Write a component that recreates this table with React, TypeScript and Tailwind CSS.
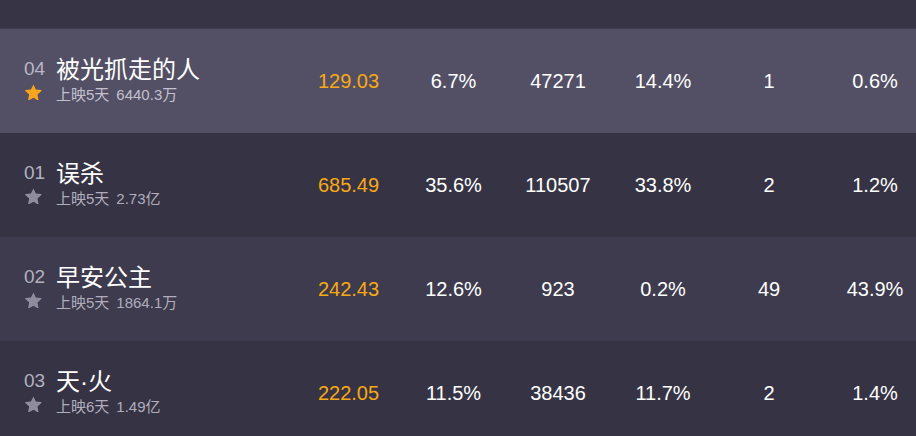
import React from "react";

type Row = {
  rank: string;
  title: string;
  days: string;
  total: string;
  vals: string[];
  bg: string;
  highlight?: boolean;
};

const rows: Row[] = [
  { rank: "04", title: "被光抓走的人", days: "上映5天", total: "6440.3万", vals: ["129.03", "6.7%", "47271", "14.4%", "1", "0.6%"], bg: "bg-[#535066]", highlight: true },
  { rank: "01", title: "误杀", days: "上映5天", total: "2.73亿", vals: ["685.49", "35.6%", "110507", "33.8%", "2", "1.2%"], bg: "bg-[#363444]" },
  { rank: "02", title: "早安公主", days: "上映5天", total: "1864.1万", vals: ["242.43", "12.6%", "923", "0.2%", "49", "43.9%"], bg: "bg-[#3d3b4d]" },
  { rank: "03", title: "天·火", days: "上映6天", total: "1.49亿", vals: ["222.05", "11.5%", "38436", "11.7%", "2", "1.4%"], bg: "bg-[#363444]" },
];

const colW = ["w-[105px]", "w-[105px]", "w-[104px]", "w-[106px]", "w-[106px]", "w-[106px]"];

function Star({ color }: { color: string }) {
  return (
    <svg width="17" height="16" viewBox="0 0 24 23" fill={color}>
      <path d="M12 0.8l3.3 7 7.6 0.9c0.6 0.1 0.9 0.8 0.4 1.3l-5.6 5.2 1.5 7.5c0.1 0.6-0.5 1.1-1.1 0.8L12 19.8l-6.6 3.7c-0.6 0.3-1.2-0.2-1.1-0.8l1.5-7.5L0.2 10c-0.5-0.4-0.2-1.2 0.4-1.3l7.6-0.9z" />
    </svg>
  );
}

export default function App() {
  return (
    <div
      className="w-[916px] h-[436px] overflow-hidden bg-[#363444]"
      style={{ fontFamily: '"Liberation Sans", "Noto Sans CJK SC", sans-serif' }}
    >
      <div className="h-[29px] bg-[#373545] border-b border-[#3e3c50]" />
      {rows.map((r) => (
        <div key={r.rank} className={`flex items-center h-[104px] ${r.bg}`}>
          <div className="w-[296px] shrink-0 pl-[24px] flex flex-col">
            <div className="flex items-center h-[30px]">
              <span className={`w-[32px] text-[19px] ${r.highlight ? "text-[#b9b7c7]" : "text-[#b3b1c0]"}`}>{r.rank}</span>
              <span className="text-[24px] leading-[30px] text-white">{r.title}</span>
            </div>
            <div className="flex items-center h-[24px] -mt-[1px]">
              <span className="w-[32px] pl-[1px] flex relative -top-[4px]">
                <Star color={r.highlight ? "#f7a51c" : "#8f8d9d"} />
              </span>
              <span className={`text-[15px] ${r.highlight ? "text-[#c3c1cf]" : "text-[#b0aebd]"}`}>
                {r.days}
                <span className="ml-[7px]">{r.total}</span>
              </span>
            </div>
          </div>
          {r.vals.map((v, i) => (
            <div
              key={i}
              className={`${colW[i]} shrink-0 text-center text-[20px] ${i === 0 ? "text-[#f9a914]" : "text-white"}`}
            >
              {v}
            </div>
          ))}
        </div>
      ))}
    </div>
  );
}
